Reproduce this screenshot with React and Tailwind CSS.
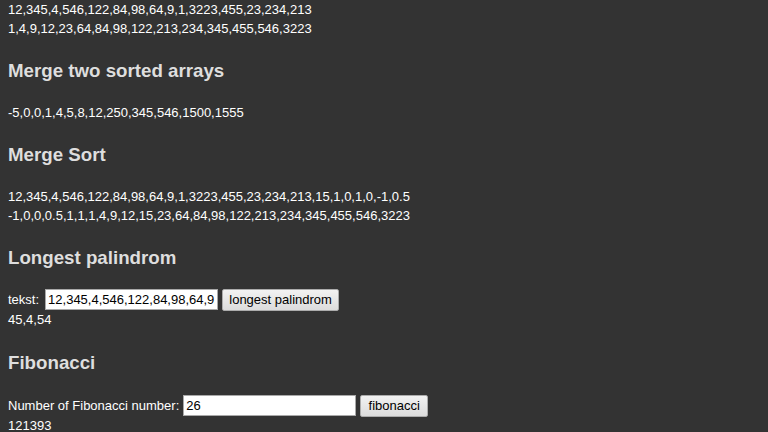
import React, { useState } from 'react';

const Heading = ({ children, className = "" }) => (
    <h3 className={`text-[18.72px] font-bold leading-[21px] text-[#dedede] ${className}`}>
        {children}
    </h3>
);

const App = () => {
    const [text, setText] = useState("12,345,4,546,122,84,98,64,9,1,3223,455,23,234,213");
    const [fibNumber, setFibNumber] = useState("26");

    return (
        <div className="min-h-screen bg-[#333333] px-2 font-['Liberation_Sans',Arial,sans-serif] text-[13px] leading-[19px] text-white">
            <div>12,345,4,546,122,84,98,64,9,1,3223,455,23,234,213</div>
            <div>1,4,9,12,23,64,84,98,122,213,234,345,455,546,3223</div>

            <Heading className="mt-[22px]">Merge two sorted arrays</Heading>
            <div className="mt-[22px]">-5,0,0,1,4,5,8,12,250,345,546,1500,1555</div>

            <Heading className="mt-[22px]">Merge Sort</Heading>
            <div className="mt-[22px]">12,345,4,546,122,84,98,64,9,1,3223,455,23,234,213,15,1,0,1,0,-1,0.5</div>
            <div>-1,0,0,0.5,1,1,1,4,9,12,15,23,64,84,98,122,213,234,345,455,546,3223</div>

            <Heading className="mt-[22px]">Longest palindrom</Heading>
            <div className="mt-[21px] flex h-[21px] items-center">
                <span>tekst:</span>
                <input
                    className="ml-[6px] h-[21px] w-[173px] border border-[#a9a9a9] bg-white px-[2px] text-[13px] text-black outline-none"
                    type="text"
                    value={text}
                    onChange={(e) => setText(e.target.value)} />
                <button
                    className="ml-[4px] h-[22px] w-[117px] rounded-[2px] border border-[#acacac] bg-gradient-to-b from-[#f2f2f2] to-[#dcdcdc] text-[13px] text-black">
                    longest palindrom
                </button>
            </div>
            <div>45,4,54</div>

            <Heading className="mt-[23px]">Fibonacci</Heading>
            <div className="mt-[22px] flex h-[21px] items-center">
                <span>Number of Fibonacci number:</span>
                <input
                    className="ml-[4px] h-[21px] w-[173px] border border-[#a9a9a9] bg-white px-[2px] text-[13px] text-black outline-none"
                    type="text"
                    value={fibNumber}
                    onChange={(e) => setFibNumber(e.target.value)} />
                <button
                    className="ml-[4px] h-[22px] w-[68px] rounded-[2px] border border-[#acacac] bg-gradient-to-b from-[#f2f2f2] to-[#dcdcdc] text-[13px] text-black">
                    fibonacci
                </button>
            </div>
            <div>121393</div>
        </div>
    );
};

export default App;
